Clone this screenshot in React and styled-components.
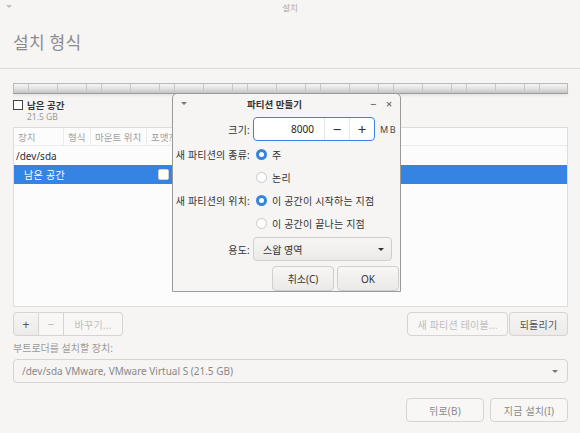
import styled, { createGlobalStyle } from 'styled-components';

const Global = createGlobalStyle`
  html, body { margin: 0; padding: 0; background: #f6f5f4; overflow: hidden; }
  body { font-family: "Noto Sans", "Noto Sans CJK KR", "DejaVu Sans", sans-serif; }
`;

const Window = styled.div`
  position: relative;
  width: 580px;
  height: 433px;
  background: #f6f5f4;
  display: flex;
  flex-direction: column;
`;

const TitleBar = styled.div`
  height: 14px;
  display: flex;
  align-items: center;
  justify-content: center;
  position: relative;
  font-size: 8.5px;
  color: #a8a8a8;
`;

const Arrow = styled.span`
  position: absolute;
  left: ${({ left }) => left}px;
  top: ${({ top }) => top}px;
  width: 0;
  height: 0;
  border-left: 3px solid transparent;
  border-right: 3px solid transparent;
  border-top: 3px solid ${({ color }) => color || '#b0b0b0'};
`;

const Header = styled.div`
  height: 54px;
  border-bottom: 1px solid #dedcda;
  display: flex;
  align-items: center;
  padding-left: 13px;
  font-size: 17px;
  color: #8c8c8c;
  letter-spacing: 0.3px;
`;

const Content = styled.div`
  padding: 14px 12px 0 13px;
  display: flex;
  flex-direction: column;
`;

const DiskBar = styled.div`
  height: 9px;
  border: 1px solid #b9b9b9;
  border-bottom-color: #9c9c9c;
  background:
    repeating-linear-gradient(90deg, transparent 0 14px, #c6c6c6 14px 14.6px),
    linear-gradient(#f6f6f6, #e2e2e2 50%, #c4c4c4);
  box-shadow: 0 2px 2px rgba(0,0,0,0.06);
`;

const FreeRow = styled.div`
  margin-top: 5px;
  height: 12px;
  display: flex;
  align-items: center;
  gap: 4px;
  font-size: 9.5px;
  font-weight: bold;
  color: #333;
`;

const SmallBox = styled.span`
  width: 8px;
  height: 8px;
  border: 1px solid #444;
  background: #fff;
`;

const SizeText = styled.div`
  height: 12px;
  line-height: 12px;
  padding-left: 14px;
  font-size: 8.5px;
  color: #999;
  margin-bottom: 4px;
`;

const Table = styled.div`
  height: 178px;
  border: 1px solid #dedcda;
  background: #fcfcfc;
  display: flex;
  flex-direction: column;
`;

const HeadRow = styled.div`
  height: 17px;
  display: flex;
  border-bottom: 1px solid #ebebeb;
  font-size: 9.5px;
  color: #a0a0a0;
`;

const HeadCell = styled.div`
  width: ${({ w }) => w}px;
  padding-left: 4px;
  display: flex;
  align-items: center;
  border-right: 1px solid #ebebeb;
  box-sizing: border-box;
  white-space: nowrap;
  overflow: hidden;
`;

const Row = styled.div`
  height: 19px;
  display: flex;
  align-items: center;
  padding-left: ${({ indent }) => indent}px;
  font-size: 10px;
  color: ${({ selected }) => (selected ? '#fff' : '#2e2e2e')};
  background: ${({ selected }) => (selected ? '#3584e4' : 'transparent')};
  position: relative;
  letter-spacing: ${({ selected }) => (selected ? '0.3px' : '0')};
`;

const RowCheck = styled.span`
  position: absolute;
  left: 144px;
  top: 4px;
  width: 9px;
  height: 9px;
  border: 1px solid #d0d0d0;
  border-radius: 2px;
  background: #fff;
`;

const ButtonRow = styled.div`
  margin-top: 5px;
  display: flex;
  justify-content: space-between;
`;

const Group = styled.div`
  display: flex;
`;

const Btn = styled.div`
  height: ${({ h }) => h || 24}px;
  width: ${({ w }) => w}px;
  box-sizing: border-box;
  display: flex;
  align-items: center;
  justify-content: center;
  border: 1px solid #d6d3d0;
  border-radius: 4px;
  background: ${({ disabled }) => (disabled ? '#f8f7f6' : 'linear-gradient(#f6f5f4, #edebe9)')};
  color: ${({ disabled, tone }) => tone || (disabled ? '#bdbdbd' : '#555')};
  font-size: 10px;
  letter-spacing: 0.2px;
  margin-left: ${({ ml }) => ml || 0}px;
`;

const GroupBtn = styled(Btn)`
  border-radius: 0;
  border-left-width: ${({ first }) => (first ? 1 : 0)}px;
  &:first-child { border-radius: 4px 0 0 4px; }
  &:last-child { border-radius: 0 4px 4px 0; }
  font-size: ${({ big }) => (big ? 12 : 10)}px;
`;

const FieldLabel = styled.div`
  margin-top: 6px;
  height: 12px;
  line-height: 12px;
  font-size: 10px;
  color: #9a9a9a;
`;

const Combo = styled.div`
  margin-top: 5px;
  height: 24px;
  box-sizing: border-box;
  border: 1px solid #d6d3d0;
  border-radius: 4px;
  background: #f6f5f4;
  display: flex;
  align-items: center;
  padding-left: 8px;
  font-size: 10px;
  color: #888;
  position: relative;
`;

const Bottom = styled.div`
  margin-top: 15px;
  display: flex;
  justify-content: flex-end;
  gap: 6px;
`;

/* dialog */
const Dialog = styled.div`
  position: absolute;
  left: 172px;
  top: 93px;
  width: 229px;
  height: 199px;
  box-sizing: border-box;
  border: 1px solid #9a9a9a;
  border-radius: 5px 5px 0 0;
  background: #f6f5f4;
  display: flex;
  flex-direction: column;
`;

const DlgTitle = styled.div`
  height: 19px;
  display: flex;
  align-items: center;
  justify-content: center;
  padding-right: 24px;
  position: relative;
  font-size: 9.5px;
  font-weight: bold;
  color: #333;
`;

const TitleBtn = styled.span`
  position: absolute;
  top: 2px;
  left: ${({ left }) => left}px;
  font-size: ${({ size }) => size}px;
  color: #555;
  font-weight: normal;
`;

const FormRow = styled.div`
  display: flex;
  align-items: center;
  height: ${({ h }) => h}px;
  margin-top: ${({ mt }) => mt || 0}px;
`;

const Label = styled.div`
  width: 77px;
  box-sizing: border-box;
  text-align: right;
  font-size: 10px;
  color: #333;
  white-space: nowrap;
  margin-right: 3px;
  letter-spacing: 0.2px;
`;

const Spin = styled.div`
  width: 122px;
  height: 24px;
  box-sizing: border-box;
  border: 1px solid #3584e4;
  border-radius: 4px;
  background: #fff;
  display: flex;
`;

const SpinValue = styled.div`
  width: 70px;
  box-sizing: border-box;
  display: flex;
  align-items: center;
  justify-content: flex-end;
  padding-right: 10px;
  font-size: 10px;
  color: #222;
`;

const SpinBtn = styled.div`
  flex: 1;
  display: flex;
  align-items: center;
  justify-content: center;
  border-left: 1px solid #e6e6e6;
  font-size: 15px;
  color: #333;
`;

const Unit = styled.span`
  margin-left: 5px;
  font-size: 9px;
  letter-spacing: 1.5px;
  color: #444;
`;

const Radio = styled.div`
  display: flex;
  align-items: center;
  gap: 5px;
  margin-left: 3px;
  font-size: 10px;
  color: #333;
  letter-spacing: 0.2px;
`;

const Dot = styled.span`
  width: 11px;
  height: 11px;
  box-sizing: border-box;
  border-radius: 50%;
  border: ${({ on }) => (on ? '3px solid #3584e4' : '1px solid #c8c8c8')};
  background: #fff;
`;

const DlgCombo = styled.div`
  width: 139px;
  height: 24px;
  box-sizing: border-box;
  border: 1px solid #d0cdca;
  border-radius: 4px;
  background: linear-gradient(#f7f6f5, #eceae8);
  display: flex;
  align-items: center;
  padding-left: 9px;
  font-size: 10px;
  color: #333;
  position: relative;
`;

const DlgButtons = styled.div`
  margin-top: 5px;
  display: flex;
  justify-content: flex-end;
  gap: 3px;
  padding-right: 1px;
`;

const DlgBtn = styled.div`
  width: 62px;
  height: 25px;
  box-sizing: border-box;
  border: 1px solid #d0cdca;
  border-radius: 4px;
  background: linear-gradient(#f7f6f5, #eceae8);
  display: flex;
  align-items: center;
  justify-content: center;
  font-size: 10px;
  color: #333;
`;

export default function App() {
  return (
    <Window>
      <Global />
      <TitleBar>
        <Arrow left={6} top={5} color="#c0c0c0" />
        설치
      </TitleBar>
      <Header>설치 형식</Header>
      <Content>
        <DiskBar />
        <FreeRow>
          <SmallBox />
          남은 공간
        </FreeRow>
        <SizeText>21.5 GB</SizeText>
        <Table>
          <HeadRow>
            <HeadCell w={50}>장치</HeadCell>
            <HeadCell w={27}>형식</HeadCell>
            <HeadCell w={56}>마운트 위치</HeadCell>
            <HeadCell w={40}>포맷?</HeadCell>
          </HeadRow>
          <Row indent={2}>/dev/sda</Row>
          <Row indent={10} selected>
            남은 공간
            <RowCheck />
          </Row>
        </Table>
        <ButtonRow>
          <Group>
            <GroupBtn w={26} first big>+</GroupBtn>
            <GroupBtn w={25} disabled big>−</GroupBtn>
            <GroupBtn w={59} disabled>바꾸기...</GroupBtn>
          </Group>
          <Group>
            <Btn w={101} disabled>새 파티션 테이블...</Btn>
            <Btn w={59} ml={1}>되돌리기</Btn>
          </Group>
        </ButtonRow>
        <FieldLabel>부트로더를 설치할 장치:</FieldLabel>
        <Combo>
          /dev/sda VMware, VMware Virtual S (21.5 GB)
          <Arrow left={538} top={10} color="#777" />
        </Combo>
        <Bottom>
          <Btn w={78} disabled tone="#8a8a8a">뒤로(B)</Btn>
          <Btn w={78} disabled tone="#8a8a8a">지금 설치(I)</Btn>
        </Bottom>
      </Content>

      <Dialog>
        <DlgTitle>
          <Arrow left={8} top={8} color="#777" />
          파티션 만들기
          <TitleBtn left={197} size={11}>−</TitleBtn>
          <TitleBtn left={213} size={11}>×</TitleBtn>
        </DlgTitle>
        <FormRow h={24} mt={4}>
          <Label>크기:</Label>
          <Spin>
            <SpinValue>8000</SpinValue>
            <SpinBtn>−</SpinBtn>
            <SpinBtn>+</SpinBtn>
          </Spin>
          <Unit>MB</Unit>
        </FormRow>
        <FormRow h={23} mt={2}>
          <Label>새 파티션의 종류:</Label>
          <Radio><Dot on />주</Radio>
        </FormRow>
        <FormRow h={23}>
          <Label />
          <Radio><Dot />논리</Radio>
        </FormRow>
        <FormRow h={23}>
          <Label>새 파티션의 위치:</Label>
          <Radio><Dot on />이 공간이 시작하는 지점</Radio>
        </FormRow>
        <FormRow h={23}>
          <Label />
          <Radio><Dot />이 공간이 끝나는 지점</Radio>
        </FormRow>
        <FormRow h={24} mt={2}>
          <Label>용도:</Label>
          <DlgCombo>
            스왑 영역
            <Arrow left={124} top={10} color="#333" />
          </DlgCombo>
        </FormRow>
        <DlgButtons>
          <DlgBtn>취소(C)</DlgBtn>
          <DlgBtn>OK</DlgBtn>
        </DlgButtons>
      </Dialog>
    </Window>
  );
}
